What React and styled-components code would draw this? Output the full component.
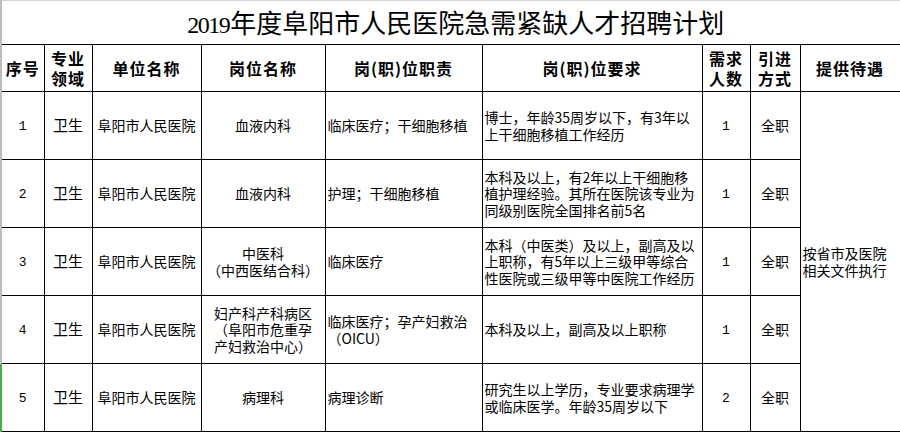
import styled, { createGlobalStyle } from "styled-components";

const GlobalStyle = createGlobalStyle`
  html, body {
    margin: 0;
    padding: 0;
    background: #ffffff;
  }
  body {
    font-family: "Noto Sans CJK SC", "Noto Sans", sans-serif;
    color: #000;
  }
`;

const Sheet = styled.table`
  border-collapse: collapse;
  table-layout: fixed;
  width: 899px;
`;

const TitleCell = styled.td`
  height: 43px;
  padding: 0;
  text-align: center;
  vertical-align: middle;
  border-top: 1px solid #d6d6d6;
  border-left: 2px solid #bdbdbd;
  border-right: 1px solid #d6d6d6;
  border-bottom: 1px solid #000;
  font-family: "Noto Sans CJK SC", serif;
  font-size: 26px;
  font-weight: 400;
  line-height: 1;
  padding-left: 10px;
`;

const Year = styled.span`
  font-family: "Liberation Serif", serif;
  font-size: 24px;
  letter-spacing: -1.5px;
  margin-right: 1px;
`;

const HeadRow = styled.tr`
  height: 47px;
`;

const Row = styled.tr`
  height: 68px;
`;

const HeadCell = styled.th`
  padding: 0;
  border: 1px solid #000;
  border-left: ${(p) => (p.first ? "2px solid #bdbdbd" : "1px solid #000")};
  font-size: 16px;
  font-weight: 700;
  letter-spacing: 1px;
  line-height: 20px;
  text-align: center;
  vertical-align: middle;
  white-space: nowrap;
`;

const Cell = styled.td`
  padding: 0 0 0 ${(p) => (p.align === "left" ? "2px" : "0")};
  border: 1px solid #000;
  border-left: ${(p) =>
    p.edge ? `2px solid ${p.edge}` : "1px solid #000"};
  font-size: 14px;
  line-height: 16.5px;
  text-align: ${(p) => p.align || "center"};
  vertical-align: middle;
  white-space: nowrap;
  overflow: hidden;
`;

const Num = styled.span`
  font-family: "Liberation Mono", monospace;
  font-size: 13px;
`;

const widths = [43, 48, 109, 124, 157, 220, 48, 50, 100];

const rows = [
  {
    no: "1",
    post: ["血液内科"],
    duty: ["临床医疗；干细胞移植"],
    req: ["博士，年龄35周岁以下，有3年以", "上干细胞移植工作经历"],
    count: "1",
  },
  {
    no: "2",
    post: ["血液内科"],
    duty: ["护理；干细胞移植"],
    req: [
      "本科及以上，有2年以上干细胞移",
      "植护理经验。其所在医院该专业为",
      "同级别医院全国排名前5名",
    ],
    count: "1",
  },
  {
    no: "3",
    post: ["中医科", "（中西医结合科）"],
    duty: ["临床医疗"],
    req: [
      "本科（中医类）及以上，副高及以",
      "上职称，有5年以上三级甲等综合",
      "性医院或三级甲等中医院工作经历",
    ],
    count: "1",
  },
  {
    no: "4",
    post: ["妇产科产科病区", "（阜阳市危重孕", "产妇救治中心）"],
    duty: ["临床医疗；孕产妇救治", "（OICU）"],
    req: ["本科及以上，副高及以上职称"],
    count: "1",
  },
  {
    no: "5",
    post: ["病理科"],
    duty: ["病理诊断"],
    req: ["研究生以上学历，专业要求病理学", "或临床医学。年龄35周岁以下"],
    count: "2",
    marked: true,
  },
];

const Lines = ({ items }) =>
  items.map((line, i) => (
    <span key={i}>
      {i > 0 && <br />}
      {line}
    </span>
  ));

const App = () => {
  return (
    <>
      <GlobalStyle />
      <Sheet>
        <colgroup>
          {widths.map((w, i) => (
            <col key={i} style={{ width: w }} />
          ))}
        </colgroup>
        <tbody>
          <tr>
            <TitleCell colSpan={9}>
              <Year>2019</Year>年度阜阳市人民医院急需紧缺人才招聘计划
            </TitleCell>
          </tr>
          <HeadRow>
            <HeadCell first>序号</HeadCell>
            <HeadCell>
              专业
              <br />
              领域
            </HeadCell>
            <HeadCell>单位名称</HeadCell>
            <HeadCell>岗位名称</HeadCell>
            <HeadCell>岗(职)位职责</HeadCell>
            <HeadCell>岗(职)位要求</HeadCell>
            <HeadCell>
              需求
              <br />
              人数
            </HeadCell>
            <HeadCell>
              引进
              <br />
              方式
            </HeadCell>
            <HeadCell>提供待遇</HeadCell>
          </HeadRow>
          {rows.map((r, i) => (
            <Row key={r.no}>
              <Cell edge={r.marked ? "#3fb24a" : "#bdbdbd"}>
                <Num>{r.no}</Num>
              </Cell>
              <Cell style={{ fontSize: 15 }}>卫生</Cell>
              <Cell>阜阳市人民医院</Cell>
              <Cell>
                <Lines items={r.post} />
              </Cell>
              <Cell align="left">
                <Lines items={r.duty} />
              </Cell>
              <Cell align="left">
                <Lines items={r.req} />
              </Cell>
              <Cell>
                <Num>{r.count}</Num>
              </Cell>
              <Cell>全职</Cell>
              {i === 0 && (
                <Cell align="left" rowSpan={5}>
                  按省市及医院
                  <br />
                  相关文件执行
                </Cell>
              )}
            </Row>
          ))}
        </tbody>
      </Sheet>
    </>
  );
};

export default App;
